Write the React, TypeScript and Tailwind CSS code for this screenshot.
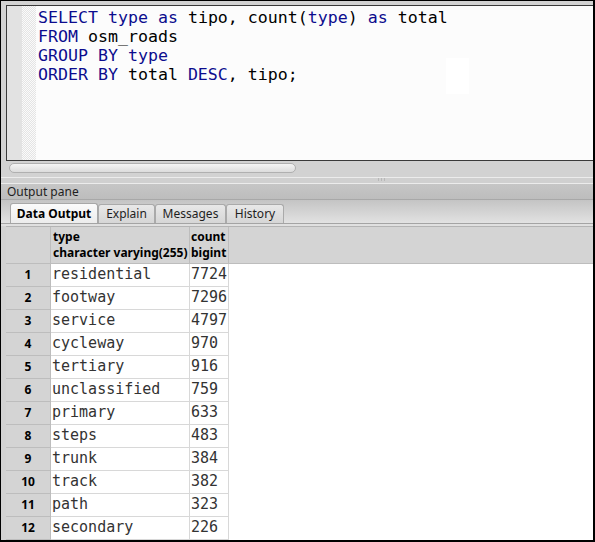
const rows: [string, string][] = [
  ["residential", "7724"],
  ["footway", "7296"],
  ["service", "4797"],
  ["cycleway", "970"],
  ["tertiary", "916"],
  ["unclassified", "759"],
  ["primary", "633"],
  ["steps", "483"],
  ["trunk", "384"],
  ["track", "382"],
  ["path", "323"],
  ["secondary", "226"],
]

const K = ({ children }: { children: React.ReactNode }) => (
  <span className="text-[#0c0c8e]">{children}</span>
)

const tabs = ["Explain", "Messages", "History"]

export default function App() {
  return (
    <div className="w-[595px] h-[542px] bg-black pt-px pl-px pr-[2px] pb-[2px] font-['Noto_Sans',sans-serif]">
      <div className="h-full bg-[#d2d2d2] flex flex-col overflow-hidden">
        {/* sql editor */}
        <div className="ml-[5px] mt-[4px] h-[156px] flex border-t border-l border-b border-[#3a3a3a] bg-[#fcfcfc] shrink-0">
          <div className="w-[15px] bg-[#e2e2e2]" />
          <div className="w-[14px] bg-[repeating-conic-gradient(#e4e4e4_0%_25%,#fafafa_0%_50%)] bg-[length:2px_2px]" />
          <div className="relative flex-1 pl-[2px] pt-[2px] font-['DejaVu_Sans_Mono',monospace] text-[16.6px] leading-[19px] text-black whitespace-pre">
            <div>
              <K>SELECT</K> <K>type</K> <K>as</K> tipo, count(<K>type</K>) <K>as</K> total
            </div>
            <div>
              <K>FROM</K> osm_roads
            </div>
            <div>
              <K>GROUP</K> <K>BY</K> <K>type</K>
            </div>
            <div>
              <K>ORDER</K> <K>BY</K> total <K>DESC</K>, tipo;
            </div>
            <div className="absolute left-[410px] top-[52px] w-[23px] h-[36px] bg-white" />
          </div>
        </div>

        {/* horizontal scrollbar */}
        <div className="h-[16px] shrink-0 pt-[2px] pl-[8px]">
          <div className="w-[287px] h-[10px] rounded-full border border-[#b0b0b0] bg-gradient-to-b from-[#f4f4f4] to-[#dcdcdc]" />
        </div>

        {/* splitter */}
        <div className="h-[7px] shrink-0 border-t border-[#ececec] border-b border-[#a6a6a6] bg-[#d0d0d0] flex justify-center">
          <div className="ml-[168px] flex gap-[2px]">
            <div className="w-px h-[3px] bg-[#b8b8b8]" />
            <div className="w-px h-[3px] bg-[#b8b8b8]" />
            <div className="w-px h-[3px] bg-[#b8b8b8]" />
          </div>
        </div>

        {/* output pane title */}
        <div className="h-[16px] shrink-0 border-b border-[#a8a8a8] bg-gradient-to-b from-[#c6c6c6] to-[#bdbdbd] pl-[6px] text-[12px] leading-[15px] text-[#1e1e1e]">
          Output pane
        </div>

        {/* tabs */}
        <div className="h-[24px] shrink-0 border-b border-[#a4a4a4] bg-gradient-to-b from-[#c4c4c4] to-[#e2e2e2] flex items-end pl-[9px] text-[12px] text-[#1e1e1e]">
          <div className="h-[20px] w-[88px] rounded-t-[3px] border border-b-0 border-[#a8a8a8] bg-gradient-to-b from-[#fbfbfb] to-[#ececec] font-bold text-black flex items-center justify-center">
            Data Output
          </div>
          {tabs.map((t) => (
            <div
              key={t}
              className={
                "h-[19px] rounded-t-[3px] border border-b-0 border-[#aaaaaa] bg-gradient-to-b from-[#e8e8e8] to-[#d6d6d6] flex items-center justify-center " +
                (t === "Explain" ? "w-[57px]" : t === "Messages" ? "w-[71px]" : "w-[58px]")
              }
            >
              {t}
            </div>
          ))}
        </div>
        <div className="h-[2px] shrink-0 bg-[#e0e0e0]" />

        {/* data grid */}
        <div className="flex-1 flex flex-col ml-[5px] border-t border-[#b4b4b4] bg-white text-[12px]">
          <div className="flex h-[37px] shrink-0 bg-[#d4d4d4] border-b border-[#bdbdbd]">
            <div className="w-[45px] border-r border-[#bdbdbd]" />
            <div className="w-[139px] border-r border-[#bdbdbd] pl-[2px] pt-[2px] font-bold leading-[16px] text-black">
              <div>type</div>
              <div>character varying(255)</div>
            </div>
            <div className="w-[39px] border-r border-[#bdbdbd] pl-[1px] pt-[2px] font-bold leading-[16px] text-black">
              <div>count</div>
              <div>bigint</div>
            </div>
          </div>
          {rows.map(([name, n], i) => (
            <div key={name} className="flex h-[23px] shrink-0">
              <div className="w-[45px] border-r border-b border-[#bdbdbd] bg-[#d4d4d4] flex items-center justify-center font-bold text-black">
                {i + 1}
              </div>
              <div className="w-[139px] border-r border-b border-[#d8d8d8] pl-[1px] font-['DejaVu_Sans_Mono',monospace] text-[15px] leading-[21px] text-[#333333]">
                {name}
              </div>
              <div className="w-[39px] border-r border-b border-[#d8d8d8] pl-[1px] font-['DejaVu_Sans_Mono',monospace] text-[15px] leading-[21px] text-[#333333]">
                {n}
              </div>
            </div>
          ))}
        </div>
      </div>
    </div>
  )
}
